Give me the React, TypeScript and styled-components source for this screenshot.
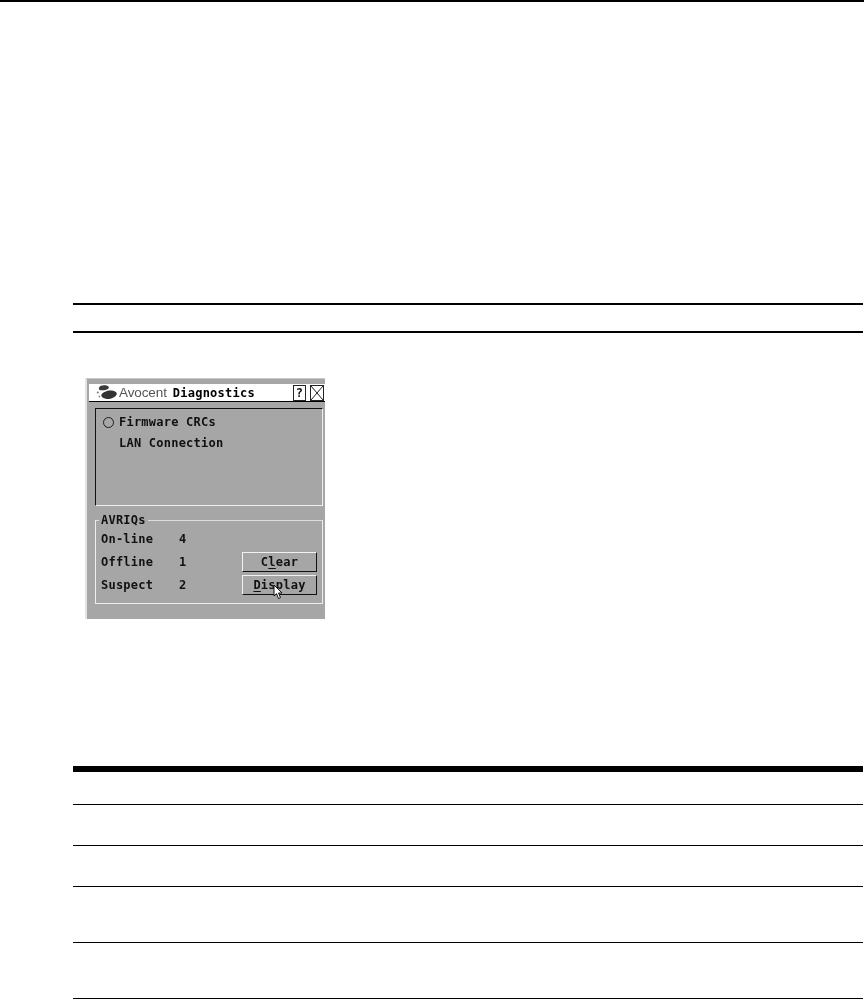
import React from 'react';
import styled, { createGlobalStyle } from 'styled-components';

const GlobalStyle = createGlobalStyle`
  html, body {
    margin: 0;
    padding: 0;
    background: #ffffff;
  }
`;

const Page = styled.div`
  width: 864px;
  height: 999px;
  overflow: hidden;
  display: flex;
  flex-direction: column;
  background: #fff;
  > * {
    flex-shrink: 0;
  }
`;

const TopRule = styled.div`
  height: 2px;
  background: #000;
`;

const SectionRules = styled.div`
  margin: 301px 1px 0 73px;
  height: 26px;
  border-top: 2px solid #000;
  border-bottom: 2px solid #000;
`;

// 截图窗口
const Shot = styled.div`
  position: relative;
  width: 240px;
  height: 241px;
  margin: 45px 0 0 85px;
  box-sizing: border-box;
  padding: 5px 0 0 2px;
  background: #a6a6a6;
  border-top: 1px solid #c8c8c8;
  border-left: 2px solid #e4e4e4;
  font-family: 'DejaVu Sans Mono', 'Liberation Mono', monospace;
  font-size: 12px;
  font-weight: 700;
  letter-spacing: 0.23px;
  color: #111;
  filter: blur(0.3px);
`;

const TitleBar = styled.div`
  height: 18px;
  box-sizing: border-box;
  display: flex;
  align-items: center;
  background: #fff;
  border-bottom: 1px solid #000;
  padding-left: 7px;
`;

const Brand = styled.span`
  margin: 0 6px 0 2px;
  font-family: 'Liberation Sans', Arial, sans-serif;
  font-size: 13.5px;
  font-weight: 400;
  letter-spacing: -0.1px;
  color: #555;
`;

const TitleText = styled.span`
  flex: 1;
  color: #000;
`;

const TitleButton = styled.div`
  width: ${props => props.$w}px;
  height: 16px;
  margin-right: ${props => props.$gap}px;
  box-sizing: border-box;
  display: flex;
  align-items: center;
  justify-content: center;
  border: 1px solid #222;
  color: #111;
  font-size: 12px;
  line-height: 1;
`;

const ListPane = styled.div`
  height: 98px;
  margin: 6px 2px 0 6px;
  box-sizing: border-box;
  border-top: 1px solid #111;
  border-left: 1px solid #111;
  border-right: 1px solid #eee;
  border-bottom: 1px solid #eee;
  padding: 6px 0 0 7px;
  display: flex;
  flex-direction: column;
  gap: 7px;
`;

const ListRow = styled.div`
  height: 14px;
  line-height: 14px;
  display: flex;
  align-items: center;
`;

const Radio = styled.span`
  width: 9px;
  height: 9px;
  border: 1px solid #1c1c1c;
  border-radius: 50%;
  margin-right: 5px;
`;

const RowLabel = styled.span`
  margin-left: ${props => (props.$indent ? 16 : 0)}px;
`;

const Group = styled.div`
  position: relative;
  height: 84px;
  margin: 14px 2px 0 6px;
  box-sizing: border-box;
  border: 1px solid #eee;
  border-top-color: #ddd;
  padding: 11px 5px 0 5px;
  display: flex;
  flex-direction: column;
  gap: 9px;
`;

const Legend = styled.span`
  position: absolute;
  top: -7px;
  left: 3px;
  padding: 0 2px;
  height: 13px;
  line-height: 13px;
  background: #a6a6a6;
`;

const StatRow = styled.div`
  height: 14px;
  display: flex;
  align-items: center;
`;

const StatName = styled.span`
  width: 78px;
`;

const StatValue = styled.span`
  width: 63px;
`;

const ActionButton = styled.div`
  position: relative;
  width: 75px;
  height: 20px;
  box-sizing: border-box;
  display: flex;
  align-items: center;
  justify-content: center;
  border-top: 1px solid #f2f2f2;
  border-left: 1px solid #f2f2f2;
  border-right: 1px solid #111;
  border-bottom: 1px solid #111;
  color: #111;
  u {
    text-underline-offset: 2px;
    text-decoration-thickness: 1px;
  }
`;

const Cursor = styled.svg`
  position: absolute;
  left: 30px;
  top: 9px;
  width: 9px;
  height: 14px;
`;

const Table = styled.div`
  margin: 147px 1px 0 73px;
  border-top: 6px solid #000;
`;

const TableRow = styled.div`
  height: ${props => props.$h}px;
  box-sizing: border-box;
  border-bottom: 1px solid #000;
`;

const rowHeights = [33, 41, 41, 56, 56];

const LogoMark = () => (
  <svg width="21" height="15" viewBox="0 0 21 15">
    <path d="M5 .8C7.5-.2 11 .2 12.5 1.6c1 1.1-.2 2.6-2.2 3.1-2.6.7-6 1-7 0C2.2 3.6 3.2 1.6 5 .8z" fill="#3a3a3a" />
    <path d="M5.5 9.5c1.5-2.8 6.5-4.6 10.5-4 3.5.5 5.5 2.2 4.5 4.2-1.2 2.4-5.5 4.6-9.5 4.3-3.5-.3-6.5-2.3-5.5-4.5z" fill="#333" />
    <circle cx="1.8" cy="7.5" r="1" fill="#777" />
    <circle cx="3.4" cy="11.5" r="0.9" fill="#888" />
  </svg>
);

const HelpIcon = () => (
  <TitleButton $w={13} $gap={4}>
    ?
  </TitleButton>
);

const CloseIcon = () => (
  <TitleButton $w={14} $gap={1}>
    <svg width="12" height="14" viewBox="0 0 12 14">
      <path d="M0 0L12 14M12 0L0 14" stroke="#222" strokeWidth="1" fill="none" />
    </svg>
  </TitleButton>
);

const DiagnosticsShot: React.FC = () => (
  <Shot>
    <TitleBar>
      <LogoMark />
      <Brand>Avocent</Brand>
      <TitleText>Diagnostics</TitleText>
      <HelpIcon />
      <CloseIcon />
    </TitleBar>
    <ListPane>
      <ListRow>
        <Radio />
        <RowLabel>Firmware CRCs</RowLabel>
      </ListRow>
      <ListRow>
        <RowLabel $indent>LAN Connection</RowLabel>
      </ListRow>
    </ListPane>
    <Group>
      <Legend>AVRIQs</Legend>
      <StatRow>
        <StatName>On-line</StatName>
        <StatValue>4</StatValue>
      </StatRow>
      <StatRow>
        <StatName>Offline</StatName>
        <StatValue>1</StatValue>
        <ActionButton>
          <span>C<u>l</u>ear</span>
        </ActionButton>
      </StatRow>
      <StatRow>
        <StatName>Suspect</StatName>
        <StatValue>2</StatValue>
        <ActionButton>
          <span><u>D</u>isplay</span>
          <Cursor viewBox="0 0 9 14">
            <path d="M1 0v11l2.5-2.3L5.5 13.5l2-.9-2-4.6H9z" fill="#fff" stroke="#111" strokeWidth="1" />
          </Cursor>
        </ActionButton>
      </StatRow>
    </Group>
  </Shot>
);

const App: React.FC = () => (
  <Page>
    <GlobalStyle />
    <TopRule />
    <SectionRules />
    <DiagnosticsShot />
    <Table>
      {rowHeights.map((h, i) => (
        <TableRow key={i} $h={h} />
      ))}
    </Table>
  </Page>
);

export default App;
